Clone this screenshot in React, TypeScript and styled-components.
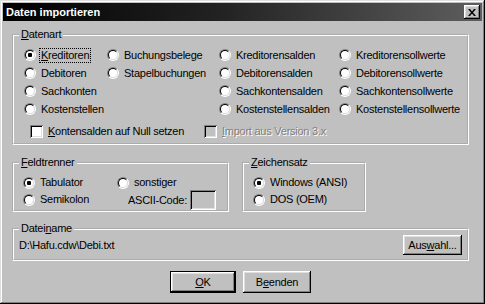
import React from "react";
import styled, { createGlobalStyle } from "styled-components";

const GlobalStyle = createGlobalStyle`
  html, body {
    margin: 0;
    padding: 0;
    background: #c0c0c0;
  }
  body {
    font-family: "Liberation Sans", Arial, sans-serif;
    font-size: 11px;
    letter-spacing: -0.25px;
    color: #000;
  }
`;

const Window = styled.div`
  box-sizing: border-box;
  width: 485px;
  height: 304px;
  padding: 3px;
  background: #c0c0c0;
  box-shadow: inset -1px -1px #000, inset 1px 1px #dfdfdf,
    inset -2px -2px #808080, inset 2px 2px #fff;
  display: flex;
  flex-direction: column;
`;

const TitleBar = styled.div`
  height: 18px;
  display: flex;
  align-items: center;
  justify-content: space-between;
  padding: 0 2px 0 3px;
  background: linear-gradient(to right, #000 0%, #222 45%, #5e5e5e 100%);
  color: #fff;
  font-weight: bold;
  letter-spacing: 0;
`;

const CloseButton = styled.div`
  box-sizing: border-box;
  width: 16px;
  height: 14px;
  display: flex;
  align-items: center;
  justify-content: center;
  background: #c0c0c0;
  box-shadow: inset -1px -1px #000, inset 1px 1px #fff,
    inset -2px -2px #808080, inset 2px 2px #dfdfdf;
`;

const Content = styled.div`
  padding: 7px 13px 0 9px;
  display: flex;
  flex-direction: column;
`;

const Group = styled.fieldset<{ $width?: number; $pb?: number }>`
  margin: 0;
  min-width: 0;
  padding: 0 5px ${(p) => p.$pb ?? 3}px 5px;
  border: 2px groove #fff;
  ${(p) => (p.$width ? `width: ${p.$width}px; box-sizing: border-box;` : "")}
`;

const Legend = styled.legend`
  padding: 0 2px;
  line-height: 13px;
`;

const Key = styled.span`
  text-decoration: underline;
`;

const OptionGrid = styled.div<{ $cols: string; $row: number; $pl: number; $pt: number }>`
  display: grid;
  grid-template-columns: ${(p) => p.$cols};
  grid-auto-rows: ${(p) => p.$row}px;
  padding: ${(p) => p.$pt}px 0 0 ${(p) => p.$pl}px;
  align-items: center;
`;

const Option = styled.label`
  display: flex;
  align-items: center;
  gap: 4px;
  white-space: nowrap;
`;

const RadioDot = styled.span<{ $checked?: boolean }>`
  box-sizing: border-box;
  position: relative;
  flex: none;
  width: 12px;
  height: 12px;
  border-radius: 50%;
  border: 1px solid;
  border-color: #808080 #fff #fff #808080;
  &::before {
    content: "";
    position: absolute;
    inset: 0;
    border-radius: 50%;
    border: 1px solid;
    border-color: #000 #dfdfdf #dfdfdf #000;
    background: #fff;
  }
  &::after {
    content: "";
    display: ${(p) => (p.$checked ? "block" : "none")};
    position: absolute;
    left: 3px;
    top: 3px;
    width: 4px;
    height: 4px;
    border-radius: 1px;
    background: #000;
  }
`;

const OptionText = styled.span<{ $focus?: boolean; $disabled?: boolean }>`
  padding: 0 1px;
  line-height: 13px;
  outline: ${(p) => (p.$focus ? "1px dotted #000" : "none")};
  color: ${(p) => (p.$disabled ? "#808080" : "#000")};
  text-shadow: ${(p) => (p.$disabled ? "1px 1px 0 #fff" : "none")};
`;

const CheckRow = styled.div`
  display: flex;
  align-items: center;
  height: 18px;
  margin-top: 4px;
  padding-left: 11px;
`;

const CheckItem = styled.label<{ $width?: number }>`
  display: flex;
  align-items: center;
  gap: 4px;
  white-space: nowrap;
  ${(p) => (p.$width ? `width: ${p.$width}px;` : "")}
`;

const CheckBox = styled.span<{ $disabled?: boolean }>`
  flex: none;
  width: 13px;
  height: 13px;
  background: ${(p) => (p.$disabled ? "#c0c0c0" : "#fff")};
  box-shadow: inset 1px 1px #808080, inset -1px -1px #fff,
    inset 2px 2px #000, inset -2px -2px #dfdfdf;
`;

const LowerRow = styled.div`
  display: flex;
  gap: 13px;
  margin-top: 11px;
`;

const AsciiField = styled.div`
  display: flex;
  align-items: center;
  gap: 3px;
  margin-left: 11px;
  white-space: nowrap;
`;

const SunkenInput = styled.div`
  width: 26px;
  height: 20px;
  background: #c0c0c0;
  box-shadow: inset 1px 1px #808080, inset -1px -1px #fff,
    inset 2px 2px #000, inset -2px -2px #dfdfdf;
`;

const FileRow = styled.div`
  display: flex;
  align-items: center;
  justify-content: space-between;
  height: 20px;
`;

const Button = styled.div<{ $w: number; $h: number; $default?: boolean }>`
  box-sizing: border-box;
  width: ${(p) => p.$w}px;
  height: ${(p) => p.$h}px;
  display: flex;
  align-items: center;
  justify-content: center;
  background: #c0c0c0;
  border: ${(p) => (p.$default ? "1px solid #000" : "none")};
  box-shadow: inset -1px -1px #000, inset 1px 1px #fff,
    inset -2px -2px #808080, inset 2px 2px #dfdfdf;
`;

const ButtonRow = styled.div`
  display: flex;
  justify-content: center;
  gap: 7px;
  margin-top: 10px;
`;

const MarginGroup = styled.div`
  margin-top: 10px;
`;

function Radio({ checked, focus, children }: { checked?: boolean; focus?: boolean; children: React.ReactNode }) {
  return (
    <Option>
      <RadioDot $checked={checked} />
      <OptionText $focus={focus}>{children}</OptionText>
    </Option>
  );
}

const datenart: (string | null)[][] = [
  ["Kreditoren", "Buchungsbelege", "Kreditorensalden", "Kreditorensollwerte"],
  ["Debitoren", "Stapelbuchungen", "Debitorensalden", "Debitorensollwerte"],
  ["Sachkonten", null, "Sachkontensalden", "Sachkontensollwerte"],
  ["Kostenstellen", null, "Kostenstellensalden", "Kostenstellensollwerte"],
];

export default function App() {
  return (
    <>
      <GlobalStyle />
      <Window>
        <TitleBar>
          <span>Daten importieren</span>
          <CloseButton>
            <svg width="8" height="7" viewBox="0 0 8 7">
              <path d="M0 0h2l2 2.4L6 0h2L5 3.5 8 7H6L4 4.6 2 7H0l3-3.5z" fill="#000" />
            </svg>
          </CloseButton>
        </TitleBar>
        <Content>
          <Group>
            <Legend>
              <Key>D</Key>atenart
            </Legend>
            <OptionGrid $cols="83px 112px 120px 1fr" $row={18} $pl={5} $pt={5}>
              {datenart.flat().map((label, i) =>
                label ? (
                  <Radio key={i} checked={i === 0} focus={i === 0}>
                    {i === 0 ? (
                      <>
                        <Key>K</Key>reditoren
                      </>
                    ) : (
                      label
                    )}
                  </Radio>
                ) : (
                  <span key={i} />
                )
              )}
            </OptionGrid>
            <CheckRow>
              <CheckItem $width={174}>
                <CheckBox />
                <OptionText>
                  <Key>K</Key>ontensalden auf Null setzen
                </OptionText>
              </CheckItem>
              <CheckItem>
                <CheckBox $disabled />
                <OptionText $disabled>
                  <Key>I</Key>mport aus Version 3.x
                </OptionText>
              </CheckItem>
            </CheckRow>
          </Group>

          <LowerRow>
            <Group $width={217} $pb={2}>
              <Legend>
                <Key>F</Key>eldtrenner
              </Legend>
              <OptionGrid $cols="94px auto" $row={17} $pl={4} $pt={5}>
                <Radio checked>Tabulator</Radio>
                <Radio>sonstiger</Radio>
                <Radio>Semikolon</Radio>
                <AsciiField>
                  <span>ASCII-Code:</span>
                  <SunkenInput />
                </AsciiField>
              </OptionGrid>
            </Group>
            <Group $width={124} $pb={2}>
              <Legend>
                <Key>Z</Key>eichensatz
              </Legend>
              <OptionGrid $cols="auto" $row={17} $pl={4} $pt={5}>
                <Radio checked>Windows (ANSI)</Radio>
                <Radio>DOS (OEM)</Radio>
              </OptionGrid>
            </Group>
          </LowerRow>

          <MarginGroup>
            <Group $pb={4}>
              <Legend>
                Datei<Key>n</Key>ame
              </Legend>
              <FileRow>
                <span>D:\Hafu.cdw\Debi.txt</span>
                <Button $w={59} $h={20}>
                  Aus<Key>w</Key>ahl...
                </Button>
              </FileRow>
            </Group>
          </MarginGroup>

          <ButtonRow>
            <Button $w={66} $h={22} $default>
              <Key>O</Key>K
            </Button>
            <Button $w={68} $h={22}>
              B<Key>e</Key>enden
            </Button>
          </ButtonRow>
        </Content>
      </Window>
    </>
  );
}
